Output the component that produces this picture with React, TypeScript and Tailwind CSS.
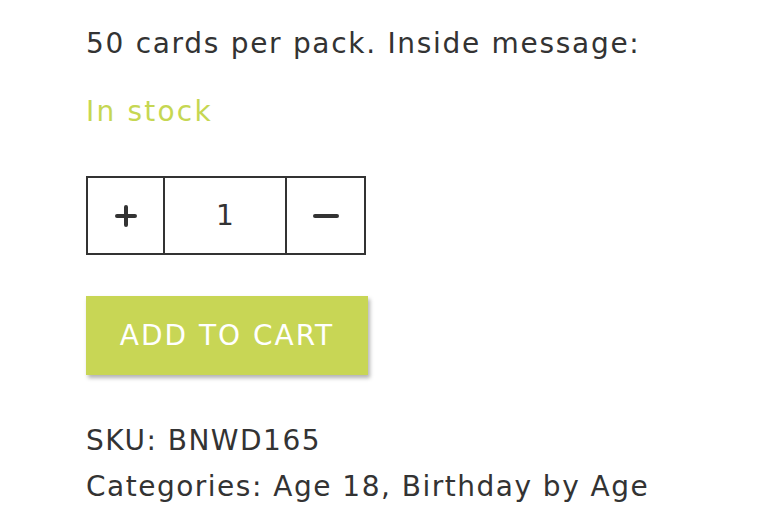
import React from "react";

export default function App() {
  return (
    <div className="min-h-screen bg-white text-[#333] font-['DejaVu_Sans',sans-serif]">
      <div className="pl-[86px] pt-[24px]">
        <p className="text-[28px] leading-[40px] tracking-[1.7px]">50 cards per pack. Inside message:</p>
        <p className="mt-[28px] text-[28px] leading-[40px] tracking-[2.2px] text-[#c6d752]">In stock</p>

        <div className="mt-[44px] flex w-[280px] h-[79px] border-2 border-[#333]">
          <button className="w-[77px] flex items-center justify-center border-r-2 border-[#333]">
            <svg width="26" height="26" viewBox="0 0 26 26">
              <path d="M13 4v18M4 13h18" stroke="#333" strokeWidth="4" strokeLinecap="round" />
            </svg>
          </button>
          <div className="w-[122px] flex items-center justify-center text-[28px] border-r-2 border-[#333]">1</div>
          <button className="flex-1 flex items-center justify-center">
            <svg width="26" height="26" viewBox="0 0 26 26">
              <path d="M2 13h22" stroke="#333" strokeWidth="4" strokeLinecap="round" />
            </svg>
          </button>
        </div>

        <button className="mt-[41px] w-[282px] h-[79px] bg-[#c8d655] text-white text-[28px] tracking-[2px] shadow-[2px_3px_4px_rgba(0,0,0,0.3)]">
          ADD TO CART
        </button>

        <div className="mt-[43px] text-[28px] leading-[46px] tracking-[1.5px]">
          <p>SKU: BNWD165</p>
          <p>Categories: Age 18, Birthday by Age</p>
        </div>
      </div>
    </div>
  );
}
